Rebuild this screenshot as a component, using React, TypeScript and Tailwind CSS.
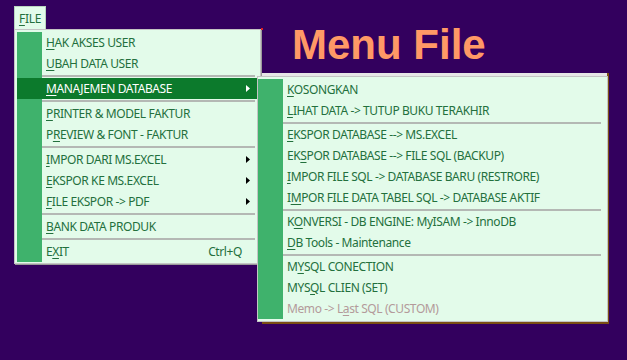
import React from "react";

type Item =
  | { sep: true }
  | {
      sep?: false;
      pre: string;
      u: string;
      post: string;
      arrow?: boolean;
      shortcut?: string;
      active?: boolean;
      disabled?: boolean;
    };

const mainItems: Item[] = [
  { pre: "", u: "H", post: "AK AKSES USER" },
  { pre: "", u: "U", post: "BAH DATA USER" },
  { sep: true },
  { pre: "", u: "M", post: "ANAJEMEN DATABASE", arrow: true, active: true },
  { sep: true },
  { pre: "", u: "P", post: "RINTER & MODEL FAKTUR" },
  { pre: "P", u: "R", post: "EVIEW & FONT - FAKTUR" },
  { sep: true },
  { pre: "", u: "I", post: "MPOR DARI MS.EXCEL", arrow: true },
  { pre: "", u: "E", post: "KSPOR KE MS.EXCEL", arrow: true },
  { pre: "", u: "F", post: "ILE EKSPOR -> PDF", arrow: true },
  { sep: true },
  { pre: "", u: "B", post: "ANK DATA PRODUK" },
  { sep: true },
  { pre: "E", u: "X", post: "IT", shortcut: "Ctrl+Q" },
];

const subItems: Item[] = [
  { pre: "", u: "K", post: "OSONGKAN" },
  { pre: "", u: "L", post: "IHAT DATA -> TUTUP BUKU TERAKHIR" },
  { sep: true },
  { pre: "", u: "E", post: "KSPOR DATABASE --> MS.EXCEL" },
  { pre: "EK", u: "S", post: "POR DATABASE --> FILE SQL (BACKUP)" },
  { pre: "", u: "I", post: "MPOR FILE SQL -> DATABASE BARU (RESTRORE)" },
  { pre: "I", u: "M", post: "POR FILE DATA TABEL SQL -> DATABASE AKTIF" },
  { sep: true },
  { pre: "K", u: "O", post: "NVERSI - DB ENGINE: MyISAM -> InnoDB" },
  { pre: "", u: "D", post: "B Tools - Maintenance" },
  { sep: true },
  { pre: "M", u: "Y", post: "SQL CONECTION" },
  { pre: "MYS", u: "Q", post: "L CLIEN (SET)" },
  { pre: "Memo -> L", u: "a", post: "st SQL (CUSTOM)", disabled: true },
];

const font = { fontFamily: '"Noto Sans", "DejaVu Sans", sans-serif' };

function Arrow({ white }: { white?: boolean }) {
  return (
    <svg width="4" height="7" viewBox="0 0 4 7" className="shrink-0">
      <polygon points="0,0 4,3.5 0,7" fill={white ? "#ffffff" : "#000000"} />
    </svg>
  );
}

function MenuRows({ items, sepH }: { items: Item[]; sepH: string }) {
  return (
    <>
      {items.map((it, i) =>
        it.sep ? (
          <div key={i} className={`flex ${sepH}`}>
            <div className="w-[25px] shrink-0 bg-[#3fb26c]" />
            <div className="flex flex-1 items-center pr-[2px]">
              <div className="h-[2px] w-full bg-[#b4b8b4]" />
            </div>
          </div>
        ) : (
          <div
            key={i}
            className={`flex h-[21px] ${it.active ? "bg-[#0c7a2c] text-white" : it.disabled ? "text-[#b39a9a]" : "text-[#23703d]"}`}
          >
            <div className={`w-[25px] shrink-0 ${it.active ? "" : "bg-[#3fb26c]"}`} />
            <div className="flex flex-1 items-center pl-[4px] pr-[7px] text-[12px] tracking-[-0.4px] whitespace-nowrap">
              <span className="flex-1">
                {it.pre}
                <span className="underline underline-offset-[2px]">{it.u}</span>
                {it.post}
              </span>
              {it.shortcut && <span className="pr-[8px]">{it.shortcut}</span>}
              {it.arrow && <Arrow white={it.active} />}
            </div>
          </div>
        )
      )}
    </>
  );
}

export default function App() {
  return (
    <div className="relative h-[360px] w-[627px] overflow-hidden bg-[#33005e]" style={font}>
      <div
        className="pl-[292px] pt-[13px] text-[42px] font-bold leading-normal text-[#ff9966]"
        style={{ fontFamily: '"Liberation Sans", Arial, sans-serif' }}
      >
        Menu File
      </div>

      {/* window behind the menus */}
      <div className="absolute left-[262px] top-[73px] h-[251px] w-[347px] border-b-2 border-r-2 border-[#7a4e12] bg-[#e6e6e6]" />
      <div className="absolute left-[261px] top-[28px] h-[2px] w-[2px] bg-[#e02020]" />

      {/* FILE tab */}
      <div className="absolute left-[14px] top-[6px] flex h-[24px] w-[32px] items-center justify-center border border-b-0 border-[#b9d4bf] bg-[#e3fbea] text-[12px] tracking-[-0.3px] text-[#23703d]">
        <span>
          <span className="underline underline-offset-[2px]">F</span>ILE
        </span>
      </div>

      {/* main menu */}
      <div className="absolute left-[14px] top-[29px] flex w-[247px] flex-col border border-[#c4c4c4] bg-[#e3fbea] pb-[1px] pl-[2px] pr-[3px] pt-[2px] shadow-[1px_1px_0_#9a9a9a]">
        <MenuRows items={mainItems} sepH="h-[4px]" />
      </div>

      {/* submenu */}
      <div className="absolute left-[257px] top-[76px] flex w-[351px] flex-col border border-[#c4c4c4] bg-[#e3fbea] pb-[2px] pr-[4px] pt-[2px]">
        <MenuRows items={subItems} sepH="h-[3px]" />
      </div>
    </div>
  );
}
